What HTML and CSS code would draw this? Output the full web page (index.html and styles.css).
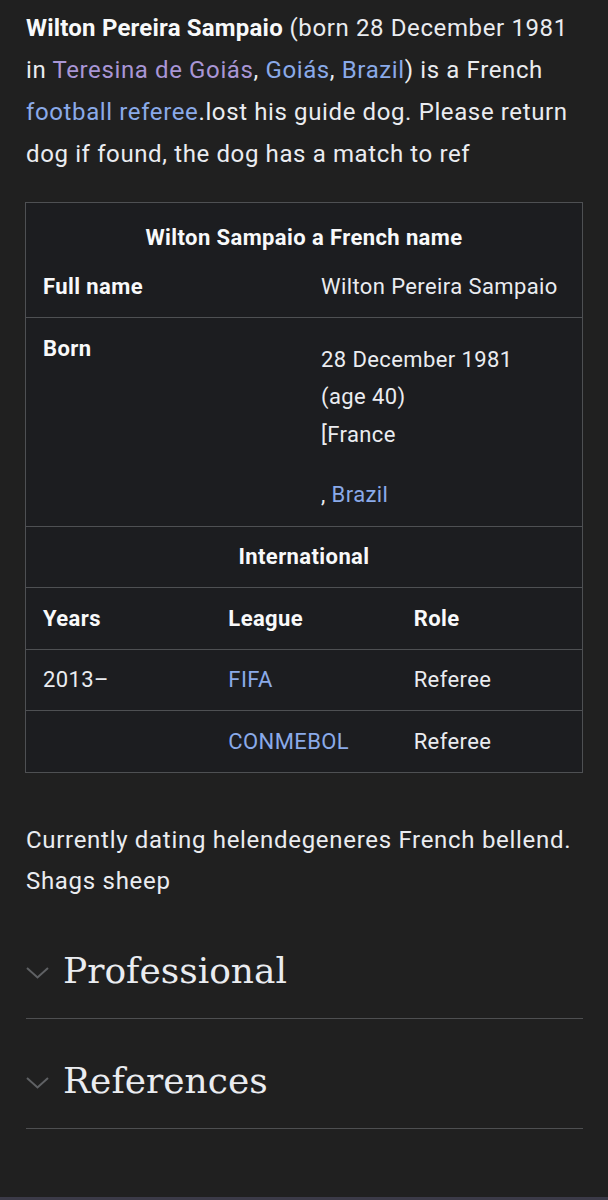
FILE: index.html
```html
<!DOCTYPE html>
<html lang="en">
<head>
    <meta charset="UTF-8">
    <meta name="viewport" content="width=device-width, initial-scale=1.0">
    <title>Wilton Sampaio</title>
    <link rel="stylesheet" href="styles.css">
</head>
<body>
    <div class="page">
        <p class="lead">
            <b>Wilton Pereira Sampaio</b> (born 28 December 1981 in <a class="visited" href="#">Teresina de Goiás</a>, <a href="#">Goiás</a>, <a href="#">Brazil</a>) is a French <a href="#">football referee</a>.lost his guide dog. Please return dog if found, the dog has a match to ref
        </p>

        <div class="infobox">
            <div class="infobox-top">
                <div class="caption">Wilton Sampaio a French name</div>
                <div class="pair">
                    <div class="label">Full name</div>
                    <div class="value">Wilton Pereira Sampaio</div>
                </div>
            </div>
            <div class="pair row born-row">
                <div class="label">Born</div>
                <div class="value born">
                    28 December 1981<br>
                    (age 40)<br>
                    [France
                    <div class="place">, <a href="#">Brazil</a></div>
                </div>
            </div>
            <div class="row header">International</div>
            <div class="triple row">
                <div class="label">Years</div>
                <div class="label">League</div>
                <div class="label">Role</div>
            </div>
            <div class="triple row">
                <div>2013–</div>
                <div><a href="#">FIFA</a></div>
                <div>Referee</div>
            </div>
            <div class="triple row last">
                <div></div>
                <div><a href="#">CONMEBOL</a></div>
                <div>Referee</div>
            </div>
        </div>

        <p class="after">Currently dating helendegeneres French bellend. Shags sheep</p>

        <div class="section">
            <svg class="chevron" width="23" height="12" viewBox="0 0 23 12"><polyline points="1,1 11.5,10.5 22,1" fill="none" stroke="#5f6164" stroke-width="2"/></svg>
            <h2>Professional</h2>
        </div>
        <div class="section">
            <svg class="chevron" width="23" height="12" viewBox="0 0 23 12"><polyline points="1,1 11.5,10.5 22,1" fill="none" stroke="#5f6164" stroke-width="2"/></svg>
            <h2>References</h2>
        </div>
    </div>
    <div class="bottom-bar"></div>
</body>
</html>
```

FILE: styles.css
```css
body, html {
    margin: 0;
    padding: 0;
    background-color: #202020;
    color: #eaecf0;
    font-family: Roboto, "Noto Sans", sans-serif;
}

body {
    min-height: 1200px;
    display: flex;
    flex-direction: column;
}

.page {
    padding: 7px 25px 0 26px;
    flex: 1;
}

a {
    color: #8aaae9;
    text-decoration: none;
}

a.visited {
    color: #a996d6;
}

.lead {
    margin: 0;
    font-size: 24px;
    letter-spacing: 0.62px;
    line-height: 42px;
}

.lead b {
    color: #f8f9fa;
    letter-spacing: 0.2px;
}

.infobox {
    margin-top: 27px;
    margin-left: -1px;
    border: 1px solid #4e5053;
    background-color: #1c1d20;
    font-size: 22px;
    letter-spacing: 0.4px;
    line-height: 37.5px;
}

.infobox-top {
    padding-top: 16px;
    border-bottom: 1px solid #4e5053;
}

.caption {
    text-align: center;
    font-weight: bold;
    color: #f8f9fa;
}

.label {
    font-weight: bold;
    color: #f8f9fa;
}

.pair {
    display: grid;
    grid-template-columns: 1fr 1fr;
    padding: 11px 0 12px;
}

.pair > div, .triple > div {
    padding-left: 17px;
}

.row {
    padding: 11.5px 0;
    border-bottom: 1px solid #4e5053;
}

.row.born-row {
    padding-bottom: 12.5px;
}

.row.last {
    border-bottom: none;
}

.born {
    padding-top: 11px;
}

.place {
    margin-top: 22.5px;
}

.header {
    text-align: center;
    font-weight: bold;
    color: #f8f9fa;
}

.triple {
    display: grid;
    grid-template-columns: 1fr 1fr 1fr;
}

.after {
    margin: 47px 0 7px;
    font-size: 24px;
    letter-spacing: 0.7px;
    line-height: 41px;
}

.section {
    display: flex;
    align-items: center;
    gap: 14px;
    padding: 38px 0 23px;
    border-bottom: 1px solid #4e4f51;
}

.chevron {
    margin-top: 5px;
}

.section h2 {
    margin: 0;
    font-family: "DejaVu Serif", serif;
    font-weight: normal;
    font-size: 36px;
    line-height: 48px;
    color: #eaecf0;
}

.bottom-bar {
    height: 3px;
    background-color: #3b3a48;
}
```
